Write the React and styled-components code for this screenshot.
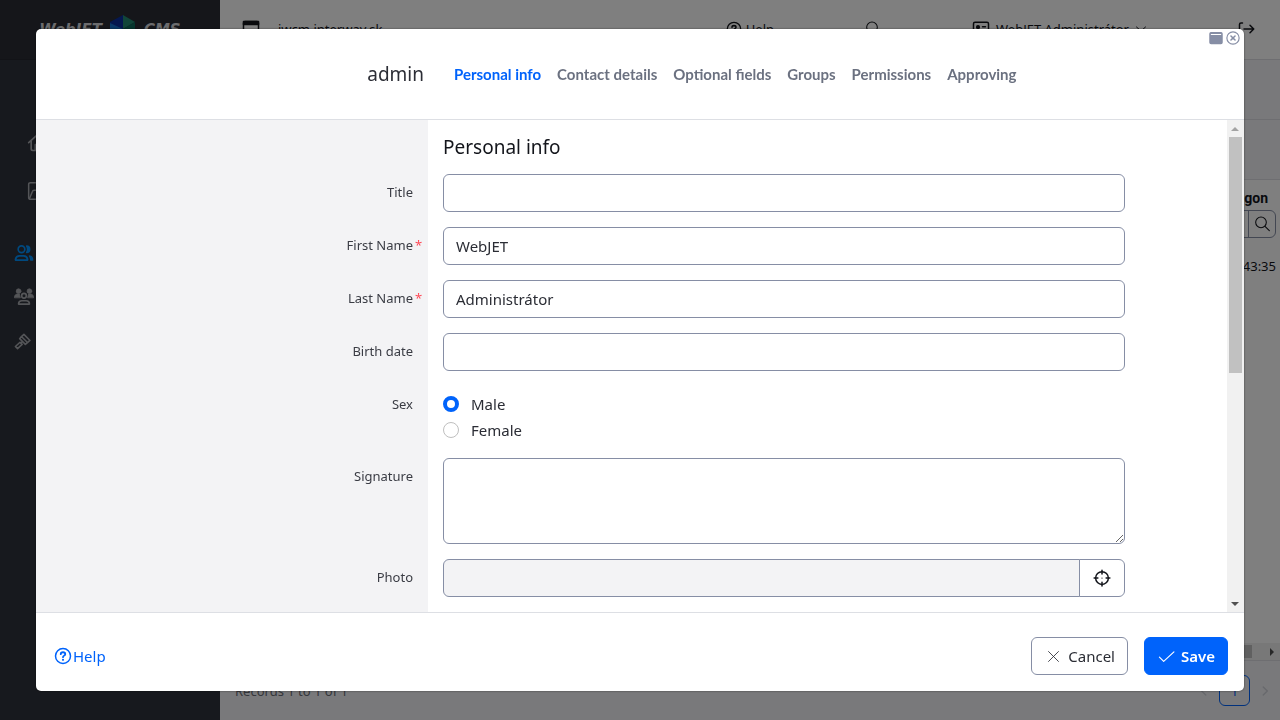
import React from "react";
import styled, { createGlobalStyle } from "styled-components";

const GlobalStyle = createGlobalStyle`
  *, *::before, *::after { box-sizing: border-box; }
  html, body, #root { height: 100%; margin: 0; }
  body {
    overflow: hidden;
    font-family: "Noto Sans", "Open Sans", sans-serif;
    font-size: 15px;
    line-height: 24px;
    color: #13151b;
    background: #fff;
  }
  button, input, textarea { font: inherit; color: inherit; margin: 0; }
  button { cursor: pointer; }
  a { color: inherit; text-decoration: none; }
`;

/* ---------- icons ---------- */

const Svg = styled.svg`
  display: block;
  flex: none;
  width: ${(p) => p.$size || 18}px;
  height: ${(p) => p.$size || 18}px;
  fill: none;
  stroke: currentColor;
  stroke-width: ${(p) => p.$stroke || 2};
  stroke-linecap: round;
  stroke-linejoin: round;
`;

const Icon = ({ size, stroke, children }) => (
  <Svg viewBox="0 0 24 24" $size={size} $stroke={stroke} aria-hidden="true">
    {children}
  </Svg>
);

const HelpIcon = ({ size }) => (
  <Icon size={size}>
    <circle cx="12" cy="12" r="10" />
    <path d="M9 9.500C9 7.600 10.300 7 12 7s3 .9 3 2.500c0 2-3 2-3 4" strokeWidth="2.400" />
    <path d="M12 17v.1" strokeWidth="2.800" />
  </Icon>
);
const SearchIcon = ({ size }) => (
  <Icon size={size} stroke={1.6}>
    <circle cx="10.500" cy="9.500" r="8" />
    <path d="M16.500 15.500 23 22" />
  </Icon>
);
const CalendarIcon = () => (
  <Icon size={18}>
    <rect x="2" y="2" width="20" height="20" rx="2" />
    <path d="M2 2h20v4H2z" fill="currentColor" />
  </Icon>
);
const IdIcon = () => (
  <Icon size={18}>
    <rect x="2" y="3" width="20" height="18" rx="2" />
    <circle cx="8" cy="9.500" r="1.800" fill="currentColor" />
    <path d="M5.500 16c0-2 5-2 5 0M14 9h4M14 13h4" />
  </Icon>
);
const ChevronDown = () => (
  <Icon size={12}><path d="m3 8 9 8 9-8" /></Icon>
);
const ChevronLeft = () => (
  <Icon size={14} stroke={2.5}><path d="m15 5-7 7 7 7" /></Icon>
);
const ChevronRight = () => (
  <Icon size={14} stroke={2.5}><path d="m9 5 7 7-7 7" /></Icon>
);
const LogoutIcon = () => (
  <Icon size={18}>
    <path d="M6 4H4a2 2 0 0 0-2 2v12a2 2 0 0 0 2 2h2M8 12h13M16 7l5 5-5 5" />
  </Icon>
);
const HomeIcon = () => (
  <Icon size={20}>
    <path d="M2 11.500 12 2.500l10 9M5 9.500V19a2 2 0 0 0 2 2h10a2 2 0 0 0 2-2V9.500M10 21v-7h4v7" />
  </Icon>
);
const FilesIcon = () => (
  <Icon size={20} stroke={1.8}>
    <rect x="2" y="2" width="20" height="20" rx="2" />
    <path d="M3 21 6.500 12.500c.3-1 .8-1.500 2-1.500H21" />
  </Icon>
);
const UsersIcon = () => (
  <Icon size={20} stroke={2}>
    <circle cx="9" cy="7.500" r="4" />
    <path d="M1.800 20.500v-1a5 5 0 0 1 5-4h4.500a5 5 0 0 1 5 4v1z" />
    <path d="M15 3.500a4 4 0 0 1 0 8c1.500-2.500 1.500-5.500 0-8zM18.500 15.500c2.500.5 4 2.500 4 5h-2.500c0-2-.5-3.500-1.500-5z" fill="currentColor" strokeWidth="1.500" />
  </Icon>
);
const GroupIcon = () => (
  <Icon size={20}>
    <g fill="currentColor" strokeWidth="1">
      <circle cx="5.500" cy="5" r="2.800" />
      <circle cx="18.500" cy="5" r="2.800" />
      <path d="M.5 12.500c0-2.500 1.500-4 3.500-4h2.500l1 4zM23.500 12.500c0-2.500-1.500-4-3.500-4h-2.500l-1 4z" />
    </g>
    <circle cx="12" cy="10.500" r="2.800" />
    <path d="M5.500 20.500c0-2.800 1.700-4 4-4h5c2.300 0 4 1.200 4 4z" />
  </Icon>
);
const GavelIcon = () => (
  <Icon size={17} stroke={2.2}>
    <path d="m14 2 8.500 8.500-3.500 3-8.500-8.500zM10.500 5 8 8l8 8 3-2.500M12 12l-2.500 2.500M8.500 13l3 3L5 22l-3-3z" />
  </Icon>
);
const CrosshairIcon = () => (
  <Icon size={18}>
    <circle cx="12" cy="12" r="8.500" />
    <path d="M12 1.500v5M12 17.500v5M1.500 12h5M17.500 12h5" />
    <path d="M12 12v.1" strokeWidth="1.600" />
  </Icon>
);
const CloseIcon = () => (
  <Icon size={17} stroke={1.2}><path d="m5 5 14 14M19 5 5 19" /></Icon>
);
const CheckIcon = () => (
  <Icon size={17} stroke={1.6}><path d="m2 13 6 6L22.500 5.500" /></Icon>
);
const CircleXIcon = () => (
  <Icon size={14}>
    <circle cx="12" cy="12" r="10.500" />
    <path d="m8.500 8.500 7 7M15.500 8.500l-7 7" strokeWidth="2.600" />
  </Icon>
);
const WindowIcon = () => (
  <Icon size={14}>
    <rect x="1.500" y="2.500" width="21" height="19" rx="2" fill="currentColor" />
    <path d="M4 6h16" stroke="#fff" strokeWidth="2" />
  </Icon>
);

/* ---------- page under the dialog ---------- */

const Page = styled.div`
  display: grid;
  grid-template-columns: 220px minmax(0, 1fr);
  height: 100%;
`;
const Sidebar = styled.aside`
  display: flex;
  flex-direction: column;
  background: #2f323c;
  color: #a8aab0;
`;
const Brand = styled.div`
  display: flex;
  align-items: center;
  justify-content: center;
  gap: 8px;
  height: 60px;
  background: #2a2c35;
  border-bottom: 1px solid #24262e;
  font-family: "DejaVu Sans", sans-serif;
  font-weight: 700;
  font-style: italic;
  font-size: 15px;
  color: #d8d9dc;
`;
const LogoMark = styled.svg`
  display: block;
  width: 26px;
  height: 30px;
`;
const Shortcuts = styled.nav`
  display: flex;
  flex-direction: column;
  gap: 26px;
  padding: 72px 27px 41px;
`;
const Menu = styled.nav`
  display: flex;
  flex-direction: column;
  gap: 24px;
  padding: 0 14px;
`;
const MenuLink = styled.a`
  display: flex;
  align-items: center;
  height: ${(p) => (p.$tall ? 22 : 20)}px;
  color: ${(p) => (p.$active ? "#0092ff" : "inherit")};
`;
const Main = styled.main`
  display: flex;
  flex-direction: column;
  min-width: 0;
`;
const TopBar = styled.header`
  display: flex;
  align-items: center;
  justify-content: space-between;
  height: 60px;
  padding: 0 24px 2px 22px;
  border-bottom: 1px solid #dcdde2;
  font-size: 13px;
`;
const TopGroup = styled.div`
  display: flex;
  align-items: center;
  gap: ${(p) => p.$gap}px;
`;
const Band = styled.div`
  flex: none;
  height: 60px;
  background: #f3f3f6;
  border-bottom: 1px solid #dcdde2;
`;
const Records = styled.section`
  display: flex;
  flex: 1;
  flex-direction: column;
  align-items: flex-end;
  padding: 6px 4px 0 15px;
  font-size: 13px;
`;
const ColumnTitle = styled.div`
  padding-right: 8px;
  font-family: Roboto, sans-serif;
  font-size: 14px;
  font-weight: 700;
`;
const Filter = styled.div`
  display: flex;
  flex: none;
  width: 160px;
  height: 28px;
  border: 1px solid #868ea5;
  border-radius: 6px;
`;
const FilterInput = styled.input`
  flex: 1;
  min-width: 0;
  border: 0;
  background: none;
`;
const FilterButton = styled.button`
  display: grid;
  place-items: center;
  width: 27px;
  padding: 0;
  border: 0;
  border-left: 1px solid #868ea5;
  background: none;
`;
const Cell = styled.div`
  padding-top: 16px;
`;
const WideScroll = styled.div`
  display: flex;
  align-items: center;
  height: 17px;
  padding-right: 6px;
  background: #f1f1f1;
`;
const WideThumb = styled.div`
  flex: 1;
  height: 13px;
  margin-right: 18px;
  background: #c1c1c1;
`;
const Arrow = styled.span`
  width: 0;
  height: 0;
  border: 4px solid transparent;
  ${(p) => p.$dir === "up" && "border-bottom-color: #a3a3a3; border-top: 0;"}
  ${(p) => p.$dir === "down" && "border-top-color: #505050; border-bottom: 0;"}
  ${(p) => p.$dir === "right" && "border-left-color: #505050; border-right: 0;"}
`;
const TableFooter = styled.footer`
  display: flex;
  align-items: center;
  justify-content: space-between;
  height: 60px;
  padding: 0 8px 0 15px;
  background: #f3f3f6;
  border-top: 1px solid #dcdde2;
  font-size: 13px;
  color: #6b6e78;
`;
const Pager = styled.div`
  display: flex;
  align-items: center;
  gap: 8px;
  color: #d0d2da;
`;
const PageButton = styled.button`
  width: 31px;
  height: 31px;
  padding: 0;
  border: 1px solid #0063fb;
  border-radius: 6px;
  background: none;
  color: #0063fb;
`;

/* ---------- dialog ---------- */

const Backdrop = styled.div`
  position: fixed;
  inset: 0;
  display: flex;
  padding: 29px 36px;
  background: rgba(0, 0, 0, 0.5);
`;
const Dialog = styled.div`
  position: relative;
  display: flex;
  flex: 1;
  flex-direction: column;
  min-width: 0;
  overflow: hidden;
  border-radius: 5px;
  background: #fff;
  box-shadow: 0 0 2px rgba(0, 0, 0, 0.6);
`;
const WindowTools = styled.div`
  position: absolute;
  top: 2px;
  right: 4px;
  display: flex;
  gap: 3px;
  color: #868ea5;
`;
const ToolButton = styled.button`
  padding: 0;
  border: 0;
  background: none;
  color: inherit;
`;
const DialogHeader = styled.header`
  display: grid;
  grid-template-columns: 392px minmax(0, 1fr);
  align-items: center;
  flex: none;
  height: 91px;
  border-bottom: 1px solid #dddfe4;
`;
const DialogTitle = styled.h5`
  margin: 0;
  padding-right: 4px;
  text-align: right;
  font-size: 19px;
  font-weight: 400;
  color: #2b2d35;
`;
const Tabs = styled.nav`
  display: flex;
  gap: 16px;
  padding-left: 26px;
`;
const Tab = styled.a`
  font-family: Lato, sans-serif;
  font-size: 15px;
  font-weight: 700;
  white-space: nowrap;
  color: ${(p) => (p.$active ? "#0063fb" : "#6b7180")};
`;
const DialogBody = styled.div`
  display: flex;
  flex: 1;
  min-height: 0;
`;
const ScrollArea = styled.form`
  flex: 1;
  min-width: 0;
  overflow-y: auto;
  scrollbar-width: none;
  background: linear-gradient(to right, #f3f3f5 392px, #fff 392px);
`;
const ScrollBar = styled.div`
  display: flex;
  flex-direction: column;
  width: 17px;
  background: #f1f1f1;
`;
const ScrollEnd = styled.div`
  display: flex;
  align-items: center;
  height: 17px;
  padding-left: 4px;
`;
const ScrollTrack = styled.div`
  flex: 1;
  padding: 0 2px;
`;
const ScrollThumb = styled.div`
  height: 236px;
  background: #c1c1c1;
`;
const SectionTitle = styled.h5`
  margin: 0 0 0 407px;
  padding: 15px 0;
  font-size: 19px;
  font-weight: 400;
`;
const Row = styled.div`
  display: grid;
  grid-template-columns: 392px minmax(0, 1fr) 87px;
  margin-bottom: 15px;
`;
const Label = styled.label`
  display: flex;
  justify-content: flex-end;
  padding-top: 6px;
  font-size: 13px;
  color: #3a3c44;
`;
const Required = styled.span`
  width: 15px;
  padding-left: 2px;
  color: #ff4b58;
`;
const Field = styled.div`
  display: flex;
  flex-direction: ${(p) => (p.$stack ? "column" : "row")};
  min-width: 0;
  padding: ${(p) => (p.$stack ? "5px 15px 0" : "0 15px")};
`;
const TextInput = styled.input`
  flex: 1;
  min-width: 0;
  height: 38px;
  padding: 0 12px;
  border: 1px solid #868ea5;
  border-radius: ${(p) => (p.$joined ? "6px 0 0 6px" : "6px")};
  background: ${(p) => (p.disabled ? "#f3f3f5" : "#fff")};
  color: #2b2d35;
`;
const TextArea = styled.textarea`
  flex: 1;
  height: 86px;
  padding: 6px 12px;
  border: 1px solid #868ea5;
  border-radius: 6px;
  resize: vertical;
`;
const PickButton = styled.button`
  display: grid;
  place-items: center;
  width: 46px;
  margin-left: -1px;
  border: 1px solid #868ea5;
  border-radius: 0 6px 6px 0;
  background: #fff;
`;
const RadioLabel = styled.label`
  display: flex;
  align-items: center;
  gap: 12px;
  height: 26px;
  color: #2b2d35;
`;
const Radio = styled.input`
  appearance: none;
  width: 16px;
  height: 16px;
  border: 1px solid #bfbfbf;
  border-radius: 50%;
  background: #fff;
  &:checked { border: 4px solid #0063fb; }
`;
const DialogFooter = styled.footer`
  display: flex;
  align-items: center;
  gap: 16px;
  flex: none;
  height: 79px;
  padding: 8px 16px 0 18px;
  border-top: 1px solid #dddfe4;
`;
const HelpLink = styled.a`
  display: flex;
  align-items: center;
  gap: 1px;
  margin-right: auto;
  color: #0063fb;
`;
const Button = styled.button`
  display: flex;
  align-items: center;
  gap: 6px;
  height: 38px;
  padding: 0 12px 0 13px;
  border: 1px solid ${(p) => (p.$primary ? "#0063fb" : "#868ea5")};
  border-radius: 6px;
  background: ${(p) => (p.$primary ? "#0063fb" : "#fff")};
  color: ${(p) => (p.$primary ? "#fff" : "#2b2d35")};
  font-weight: ${(p) => (p.$primary ? 600 : 400)};
`;

const tabs = ["Personal info", "Contact details", "Optional fields", "Groups", "Permissions", "Approving"];

const FormRow = ({ id, label, required, stack, children }) => (
  <Row>
    <Label htmlFor={id}>
      {label}
      <Required>{required ? "*" : ""}</Required>
    </Label>
    <Field $stack={stack}>{children}</Field>
  </Row>
);

const Background = () => (
  <Page>
    <Sidebar>
      <Brand>
        <span>WebJET</span>
        <LogoMark viewBox="0 0 26 30" aria-hidden="true">
          <path d="M13 0 0 7v15l13 8z" fill="#0a2f9e" />
          <path d="m13 0 12 7-12 7z" fill="#238a72" />
          <path d="m13 14 12-7v15l-12 8z" fill="#0c6a5c" />
          <path d="m0 8 13 6v8L0 16z" fill="#1470d0" />
        </LogoMark>
        <span>CMS</span>
      </Brand>
      <Shortcuts>
        <MenuLink href="#home" $tall aria-label="Home"><HomeIcon /></MenuLink>
        <MenuLink href="#files" $tall aria-label="Files"><FilesIcon /></MenuLink>
      </Shortcuts>
      <Menu>
        <MenuLink href="#users" $active aria-label="Users"><UsersIcon /></MenuLink>
        <MenuLink href="#groups" aria-label="Groups"><GroupIcon /></MenuLink>
        <MenuLink href="#permissions" aria-label="Permissions"><GavelIcon /></MenuLink>
      </Menu>
    </Sidebar>
    <Main>
      <TopBar>
        <TopGroup $gap={18}><CalendarIcon /><span>iwcm.interway.sk</span></TopGroup>
        <TopGroup $gap={91}>
          <TopGroup $gap={4}><HelpIcon size={16} /><span>Help</span></TopGroup>
          <SearchIcon size={16} />
          <TopGroup $gap={6}><IdIcon /><span>WebJET Administrátor</span><ChevronDown /></TopGroup>
          <LogoutIcon />
        </TopGroup>
      </TopBar>
      <Band />
      <Band />
      <Records>
        <ColumnTitle>Last logon</ColumnTitle>
        <Filter>
          <FilterInput aria-label="Last logon" />
          <FilterButton type="button" aria-label="Search"><SearchIcon size={16} /></FilterButton>
        </Filter>
        <Cell>13:43:35</Cell>
      </Records>
      <WideScroll><WideThumb /><Arrow $dir="right" /></WideScroll>
      <TableFooter>
        <span>Records 1 to 1 of 1</span>
        <Pager>
          <ChevronLeft />
          <PageButton type="button">1</PageButton>
          <ChevronRight />
        </Pager>
      </TableFooter>
    </Main>
  </Page>
);

export default function App() {
  return (
    <>
      <GlobalStyle />
      <Background />
      <Backdrop>
        <Dialog role="dialog" aria-label="admin">
          <WindowTools>
            <ToolButton type="button" aria-label="Maximize"><WindowIcon /></ToolButton>
            <ToolButton type="button" aria-label="Close"><CircleXIcon /></ToolButton>
          </WindowTools>
          <DialogHeader>
            <DialogTitle>admin</DialogTitle>
            <Tabs>
              {tabs.map((name, i) => (
                <Tab key={name} href="#tab" $active={i === 0}>{name}</Tab>
              ))}
            </Tabs>
          </DialogHeader>
          <DialogBody>
            <ScrollArea>
              <SectionTitle>Personal info</SectionTitle>
              <FormRow id="title" label="Title"><TextInput id="title" /></FormRow>
              <FormRow id="first" label="First Name" required><TextInput id="first" defaultValue="WebJET" /></FormRow>
              <FormRow id="last" label="Last Name" required><TextInput id="last" defaultValue="Administrátor" /></FormRow>
              <FormRow id="birth" label="Birth date"><TextInput id="birth" /></FormRow>
              <FormRow id="male" label="Sex" stack>
                <RadioLabel><Radio type="radio" name="sex" id="male" defaultChecked />Male</RadioLabel>
                <RadioLabel><Radio type="radio" name="sex" />Female</RadioLabel>
              </FormRow>
              <FormRow id="signature" label="Signature"><TextArea id="signature" /></FormRow>
              <FormRow id="photo" label="Photo">
                <TextInput id="photo" disabled $joined />
                <PickButton type="button" aria-label="Choose photo"><CrosshairIcon /></PickButton>
              </FormRow>
            </ScrollArea>
            <ScrollBar>
              <ScrollEnd><Arrow $dir="up" /></ScrollEnd>
              <ScrollTrack><ScrollThumb /></ScrollTrack>
              <ScrollEnd><Arrow $dir="down" /></ScrollEnd>
            </ScrollBar>
          </DialogBody>
          <DialogFooter>
            <HelpLink href="#help"><HelpIcon size={18} />Help</HelpLink>
            <Button type="button"><CloseIcon />Cancel</Button>
            <Button type="button" $primary><CheckIcon />Save</Button>
          </DialogFooter>
        </Dialog>
      </Backdrop>
    </>
  );
}
